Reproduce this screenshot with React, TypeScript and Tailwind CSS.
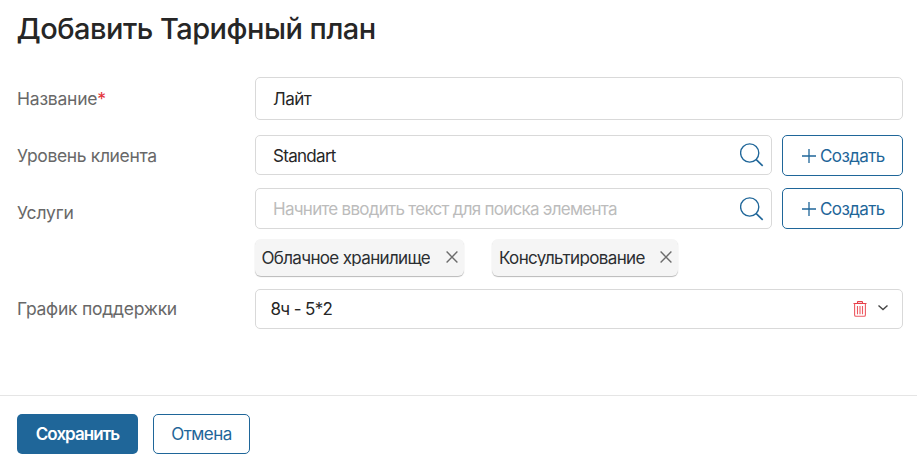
import React from "react";

function Label({ children, className }: { children: React.ReactNode; className: string }) {
  return (
    <div className={`w-[238px] shrink-0 whitespace-nowrap text-[17.5px] leading-6 text-[#686868] ${className}`}>
      {children}
    </div>
  );
}

function SearchIcon() {
  return (
    <svg width="24" height="24" viewBox="0 0 24 24" fill="none" stroke="#1f6699" strokeWidth="1.35" className="shrink-0">
      <circle cx="9.7" cy="10" r="9.1" />
      <path d="M16 16.4 22.7 22.9" strokeWidth="1.6" />
    </svg>
  );
}

function CreateButton() {
  return (
    <button className="flex h-[41px] w-[121px] shrink-0 items-center rounded-[5px] border border-[#1f6699] pl-[19px] text-[17px] text-[#1f6699]">
      <svg width="14" height="14" viewBox="0 0 14 14" stroke="#1f6699" strokeWidth="1.3" className="mr-1 shrink-0">
        <path d="M7 0v14M0 7h14" />
      </svg>
      <span className="pt-[2px] tracking-[-0.6px]">Создать</span>
    </button>
  );
}

function Chip({ children, className }: { children: React.ReactNode; className: string }) {
  return (
    <div className={`flex h-[37px] items-center justify-between rounded-[6px] bg-[#f5f5f5] pl-[7px] pr-[6px] text-[17px] text-[#2b2e31] shadow-[0_1px_1px_rgba(0,0,0,0.28)] ${className}`}>
      {children}
      <svg width="12" height="12" viewBox="0 0 12 12" fill="none" stroke="#6c6c6c" strokeWidth="1.4" className="mb-[2px] shrink-0">
        <path d="m.6.6 10.8 10.8M11.4.6.6 11.4" />
      </svg>
    </div>
  );
}

export default function App() {
  return (
    <div className="flex h-[467px] w-[917px] flex-col bg-white font-['Inter',sans-serif] text-[#262626]">
      <h1 className="h-[77px] whitespace-nowrap pl-[16.5px] pt-[9px] text-[29px] font-medium leading-10 tracking-[-0.51px]">
        Добавить Тарифный план
      </h1>
      <div className="flex h-[318px] flex-col pl-[17px] pr-[14px]">
        <div className="flex h-[58px]">
          <Label className="pt-[10px] tracking-[-0.22px]">
            Название<span className="text-[#e3343b]">*</span>
          </Label>
          <div className="flex h-[43px] flex-1 items-center rounded-[5px] border border-[#d9d9d9] pl-[17px] pt-[3px] text-[17px] tracking-[-0.5px]">
            Лайт
          </div>
        </div>
        <div className="flex h-[53px]">
          <Label className="pt-[9px] tracking-[-0.36px]">Уровень клиента</Label>
          <div className="mr-[10px] flex h-10 flex-1 items-center justify-between rounded-[5px] border border-[#d9d9d9] pl-[17px] pr-[7px] text-[17px]">
            <span className="pt-[4px] tracking-[-0.7px]">Standart</span>
            <SearchIcon />
          </div>
          <CreateButton />
        </div>
        <div className="flex h-[51px]">
          <Label className="pt-[13px] tracking-[-0.12px]">Услуги</Label>
          <div className="mr-[10px] flex h-[41px] flex-1 items-center justify-between rounded-[5px] border border-[#d9d9d9] pl-[17px] pr-[7px] text-[17px] text-[#bcbcbc]">
            <span className="pt-[2px] tracking-[-0.73px]">Начните вводить текст для поиска элемента</span>
            <SearchIcon />
          </div>
          <CreateButton />
        </div>
        <div className="flex h-[50px] gap-[28.5px] pl-[237.5px]">
          <Chip className="w-[209px]">
            <span className="mt-[7px] h-5 self-start overflow-hidden leading-6 tracking-[-0.66px]">Облачное хранилище</span>
          </Chip>
          <Chip className="w-[186px]">
            <span className="mt-[7px] h-5 self-start overflow-hidden leading-6 tracking-[-0.65px]">Консультирование</span>
          </Chip>
        </div>
        <div className="flex h-10">
          <Label className="pt-2 tracking-[-0.25px]">График поддержки</Label>
          <div className="flex flex-1 items-center rounded-[5px] border border-[#d9d9d9] pl-[14.5px] pr-[14px] text-[17px]">
            <span className="flex-1 pt-px tracking-[-0.65px]">8ч - 5*2</span>
            <svg width="14" height="16" viewBox="0 0 14 16" fill="none" stroke="#ed5961" strokeWidth="1.1" className="mr-[11px]">
              <path d="M.5 2.5h13M4.5 2.5V1.2Q4.5.6 5.1.6h3.8q.6 0 .6.6v1.3" stroke="#e63e48" />
              <path d="M1.6 2.8v11.1q0 1.3 1.3 1.3h8.2q1.3 0 1.3-1.3V2.8" />
              <path d="M4.5 5v8.2M7 5v8.2M9.5 5v8.2" />
            </svg>
            <svg width="10" height="6" viewBox="0 0 10 6" fill="none" stroke="#454545" strokeWidth="1.4" className="mb-[2px]">
              <path d="m.5.6 4.5 4 4.5-4" />
            </svg>
          </div>
        </div>
      </div>
      <div className="flex h-[72px] gap-[15px] border-t border-[#e5e5e5] pl-[17px] pt-[18px] text-[17px]">
        <button className="h-10 w-[121px] rounded-[5px] bg-[#1f6699] pt-[2px] font-semibold tracking-[-0.95px] text-white">Сохранить</button>
        <button className="h-10 w-[97px] rounded-[5px] border border-[#1f6699] pt-[2px] tracking-[-0.55px] text-[#1f6699]">Отмена</button>
      </div>
    </div>
  );
}
